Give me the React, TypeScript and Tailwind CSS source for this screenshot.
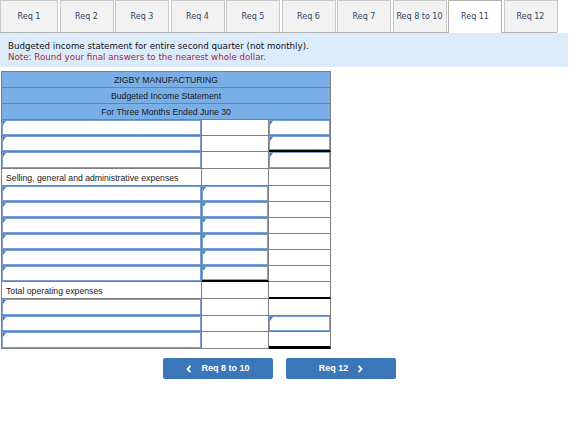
import React from "react";

type Kind = "input" | "blank";
type Row = {
  label?: string;
  c1: Kind;
  c2: Kind;
  c3: Kind;
  tall: boolean;
  c2Black?: boolean;
  c3Black?: "thin" | "thick" | "double";
};

const tabs = ["Req 1", "Req 2", "Req 3", "Req 4", "Req 5", "Req 6", "Req 7", "Req 8 to 10", "Req 11", "Req 12"];

const rows: Row[] = [
  { c1: "input", c2: "blank", c3: "input", tall: false },
  { c1: "input", c2: "blank", c3: "input", tall: false, c3Black: "thick" },
  { c1: "input", c2: "blank", c3: "input", tall: true },
  { label: "Selling, general and administrative expenses", c1: "blank", c2: "blank", c3: "blank", tall: true },
  { c1: "input", c2: "input", c3: "blank", tall: false },
  { c1: "input", c2: "input", c3: "blank", tall: false },
  { c1: "input", c2: "input", c3: "blank", tall: false },
  { c1: "input", c2: "input", c3: "blank", tall: false },
  { c1: "input", c2: "input", c3: "blank", tall: false },
  { c1: "input", c2: "input", c3: "blank", tall: false, c2Black: true },
  { label: "Total operating expenses", c1: "blank", c2: "blank", c3: "blank", tall: true, c3Black: "thin" },
  { c1: "input", c2: "blank", c3: "blank", tall: true },
  { c1: "input", c2: "blank", c3: "input", tall: false },
  { c1: "input", c2: "blank", c3: "blank", tall: true, c3Black: "double" },
];

function InputBox() {
  return (
    <div className="relative h-full w-full border border-[#779fd6] bg-white">
      <div className="absolute left-0 top-0 h-0 w-0 border-t-[4px] border-r-[3px] border-t-[#3d7fd8] border-r-transparent" />
    </div>
  );
}

function bottomClass(b?: "thin" | "thick" | "double") {
  if (b === "thin") return "border-b-[2px] border-b-black";
  if (b === "thick") return "border-b-[2px] border-b-black";
  if (b === "double") return "border-b-[3px] border-b-black";
  return "border-b border-b-[#7f7f7f]";
}

export default function App() {
  return (
    <div className="w-[580px] h-[426px] bg-white" style={{ fontFamily: '"Liberation Sans", Arial, sans-serif' }}>
      {/* Tabs */}
      <div className="flex h-[33px] w-[557px] gap-[1.5px] border-b border-[#b3b3b3]">
        {tabs.map((t, i) => {
          const active = t === "Req 11";
          return (
            <div
              key={t}
              className={
                (i === 0 ? "w-[58px] " : "w-[54px] ") +
                (active
                  ? "h-[33px] bg-white border border-b-0 border-[#b3b3b3] "
                  : "h-[32px] bg-[#f2f2f2] border border-b-0 border-[#c9c9c9] ") +
                "flex items-center justify-center text-[8px] text-[#2e4566] shrink-0"
              }
              style={{ fontFamily: '"DejaVu Sans", Verdana, sans-serif' }}
            >
              {t}
            </div>
          );
        })}
      </div>

      {/* Banner */}
      <div
        className="w-[568px] h-[34px] bg-[#dcebf9] pl-[8px] pt-[8px] text-[8.7px] leading-[11px]"
        style={{ fontFamily: '"DejaVu Sans", Verdana, sans-serif' }}
      >
        <div className="text-[#111]">Budgeted income statement for entire second quarter (not monthly).</div>
        <div className="text-[#a5283a]">Note: Round your final answers to the nearest whole dollar.</div>
      </div>

      {/* Table */}
      <div className="ml-[1px] mt-[4px] w-[330px] border-l border-t border-[#7f7f7f] text-[8.7px] text-[#1a1a1a]">
        {["ZIGBY MANUFACTURING", "Budgeted Income Statement", "For Three Months Ended June 30"].map((h) => (
          <div
            key={h}
            className="h-[16px] w-[329px] border-r border-b border-[#7f7f7f] bg-[#79aee6] flex items-center justify-center pt-[2px]"
          >
            {h}
          </div>
        ))}
        {rows.map((r, idx) => (
          <div key={idx} className={"flex " + (r.tall ? "h-[17px]" : "h-[16px]")}>
            <div className="w-[200px] border-r border-b border-[#7f7f7f]">
              {r.label ? (
                <div className="h-full flex items-center pl-[4px] pt-[3px]">{r.label}</div>
              ) : r.c1 === "input" ? (
                <InputBox />
              ) : null}
            </div>
            <div
              className={
                "w-[67px] border-r border-[#7f7f7f] " +
                (r.c2Black ? "border-b-[2px] border-b-black" : "border-b border-b-[#7f7f7f]")
              }
            >
              {r.c2 === "input" ? <InputBox /> : null}
            </div>
            <div className={"w-[62px] border-r border-r-[#7f7f7f] " + bottomClass(r.c3Black)}>
              {r.c3 === "input" ? <InputBox /> : null}
            </div>
          </div>
        ))}
      </div>

      {/* Buttons */}
      <div className="w-[559px] mt-[9px] flex justify-center gap-[13px]">
        <button className="w-[110px] h-[21px] rounded-[2px] bg-[#3b77b8] text-white font-bold text-[9px] flex items-center justify-center gap-[9px]">
          <svg width="6" height="8" viewBox="0 0 6 8">
            <path d="M4.5 0.8 L1.5 4 L4.5 7.2" stroke="white" strokeWidth="1.8" fill="none" />
          </svg>
          <span>Req 8 to 10</span>
        </button>
        <button className="w-[110px] h-[21px] rounded-[2px] bg-[#3b77b8] text-white font-bold text-[9px] flex items-center justify-center gap-[9px]">
          <span>Req 12</span>
          <svg width="6" height="8" viewBox="0 0 6 8">
            <path d="M1.5 0.8 L4.5 4 L1.5 7.2" stroke="white" strokeWidth="1.8" fill="none" />
          </svg>
        </button>
      </div>
    </div>
  );
}
